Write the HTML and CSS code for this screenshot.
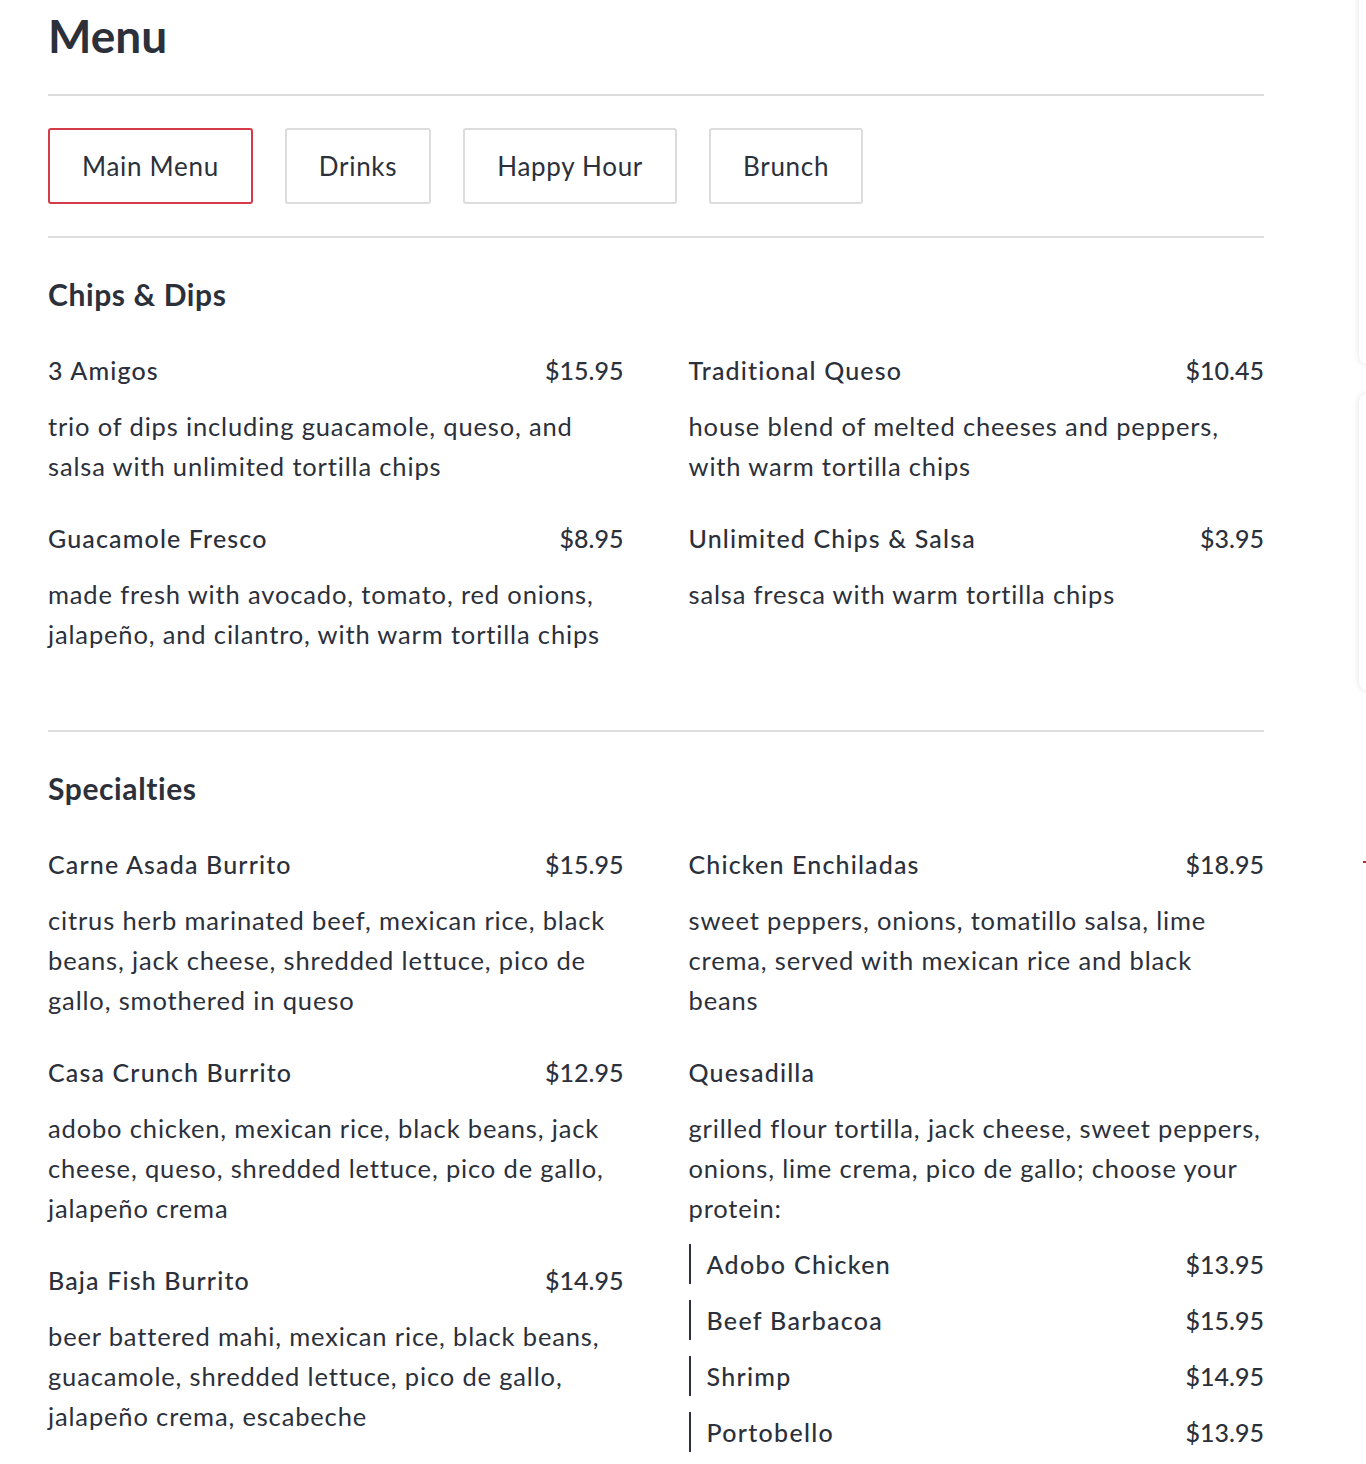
FILE: index.html
```html
<!DOCTYPE html>
<html lang="en">
<head>
<meta charset="utf-8">
<title>Menu</title>
<link rel="stylesheet" href="styles.css">
</head>
<body>
<main class="page">
  <h1 class="title">Menu</h1>
  <hr class="rule">
  <nav class="tabs">
    <button class="tab active">Main Menu</button>
    <button class="tab">Drinks</button>
    <button class="tab">Happy Hour</button>
    <button class="tab">Brunch</button>
  </nav>
  <hr class="rule">

  <section class="section">
    <h2 class="section-title">Chips &amp; Dips</h2>
    <div class="grid">
      <div class="col">
        <div class="item">
          <div class="item-head"><span class="name">3 Amigos</span><span class="price">$15.95</span></div>
          <p class="desc">trio of dips including guacamole, queso, and salsa with unlimited tortilla chips</p>
        </div>
        <div class="item">
          <div class="item-head"><span class="name">Guacamole Fresco</span><span class="price">$8.95</span></div>
          <p class="desc">made fresh with avocado, tomato, red onions, jalapeño, and cilantro, with warm tortilla chips</p>
        </div>
      </div>
      <div class="col">
        <div class="item">
          <div class="item-head"><span class="name">Traditional Queso</span><span class="price">$10.45</span></div>
          <p class="desc">house blend of melted cheeses and peppers, with warm tortilla chips</p>
        </div>
        <div class="item">
          <div class="item-head"><span class="name">Unlimited Chips &amp; Salsa</span><span class="price">$3.95</span></div>
          <p class="desc">salsa fresca with warm tortilla chips</p>
        </div>
      </div>
    </div>
  </section>
  <hr class="rule">

  <section class="section">
    <h2 class="section-title">Specialties</h2>
    <div class="grid">
      <div class="col">
        <div class="item">
          <div class="item-head"><span class="name">Carne Asada Burrito</span><span class="price">$15.95</span></div>
          <p class="desc">citrus herb marinated beef, mexican rice, black beans, jack cheese, shredded lettuce, pico de gallo, smothered in queso</p>
        </div>
        <div class="item">
          <div class="item-head"><span class="name">Casa Crunch Burrito</span><span class="price">$12.95</span></div>
          <p class="desc">adobo chicken, mexican rice, black beans, jack cheese, queso, shredded lettuce, pico de gallo, jalapeño crema</p>
        </div>
        <div class="item">
          <div class="item-head"><span class="name">Baja Fish Burrito</span><span class="price">$14.95</span></div>
          <p class="desc">beer battered mahi, mexican rice, black beans, guacamole, shredded lettuce, pico de gallo, jalapeño crema, escabeche</p>
        </div>
      </div>
      <div class="col">
        <div class="item">
          <div class="item-head"><span class="name">Chicken Enchiladas</span><span class="price">$18.95</span></div>
          <p class="desc">sweet peppers, onions, tomatillo salsa, lime crema, served with mexican rice and black beans</p>
        </div>
        <div class="item">
          <div class="item-head"><span class="name">Quesadilla</span></div>
          <p class="desc">grilled flour tortilla, jack cheese, sweet peppers, onions, lime crema, pico de gallo; choose your protein:</p>
          <ul class="options">
            <li class="option"><span class="name">Adobo Chicken</span><span class="price">$13.95</span></li>
            <li class="option"><span class="name">Beef Barbacoa</span><span class="price">$15.95</span></li>
            <li class="option"><span class="name">Shrimp</span><span class="price">$14.95</span></li>
            <li class="option"><span class="name">Portobello</span><span class="price">$13.95</span></li>
          </ul>
        </div>
      </div>
    </div>
  </section>
</main>

<div class="side-card side-card-top"></div>
<div class="side-card side-card-bottom"></div>
<div class="side-mark"></div>
</body>
</html>
```

FILE: styles.css
```css
* { box-sizing: border-box; }

html, body {
  margin: 0;
  padding: 0;
  background: #ffffff;
}

body {
  font-family: Lato, "Open Sans", "Liberation Sans", sans-serif;
  color: #2b303b;
  overflow: hidden;
}

.page {
  width: 1216px;
  margin-left: 48px;
  padding-top: 6px;
}

.title {
  margin: 0;
  font-size: 46px;
  line-height: 60px;
  font-weight: 700;
  letter-spacing: 0;
}

.rule {
  margin: 0;
  border: 0;
  height: 2px;
  background: #dddddd;
}

.title + .rule { margin-top: 28px; }

.tabs {
  display: flex;
  gap: 32px;
  padding: 32px 0 32px;
}

.tab {
  font-family: inherit;
  font-size: 26px;
  letter-spacing: 0.7px;
  color: #2b303b;
  background: #ffffff;
  border: 2px solid #dcdcdc;
  border-radius: 3px;
  height: 76px;
  padding: 0 32px;
  cursor: pointer;
}

.tab.active { border-color: #d43a47; }

.section {
  padding: 36px 0 44px;
}

.section-title {
  margin: 0 0 36px;
  font-size: 30px;
  line-height: 40px;
  font-weight: 700;
  letter-spacing: 0.6px;
}

.grid {
  display: grid;
  grid-template-columns: 1fr 1fr;
  column-gap: 65px;
}

.item { margin-bottom: 32px; }

.item-head {
  display: flex;
  justify-content: space-between;
  font-size: 25px;
  line-height: 40px;
  font-weight: 500;
}

.name { letter-spacing: 1.15px; }
.price { letter-spacing: 0; }

.desc {
  margin: 16px 0 0;
  font-size: 25.5px;
  line-height: 40px;
  letter-spacing: 0.85px;
}

.options {
  list-style: none;
  margin: 16px 0 0;
  padding: 0;
  display: flex;
  flex-direction: column;
  gap: 16px;
}

.option {
  display: flex;
  justify-content: space-between;
  border-left: 2px solid #2b303b;
  padding-left: 16px;
  font-size: 25px;
  line-height: 40px;
  font-weight: 500;
}

.option .name { letter-spacing: 1.3px; }

.side-card {
  position: absolute;
  left: 1359px;
  width: 40px;
  background: #ffffff;
  border-radius: 8px;
  box-shadow: 0 0 6px rgba(0, 0, 0, 0.12);
}

.side-card-top { top: -20px; height: 384px; }
.side-card-bottom { top: 394px; height: 296px; }

.side-mark {
  position: absolute;
  left: 1363px;
  top: 861px;
  width: 4px;
  height: 2px;
  background: #b8283a;
}
```
